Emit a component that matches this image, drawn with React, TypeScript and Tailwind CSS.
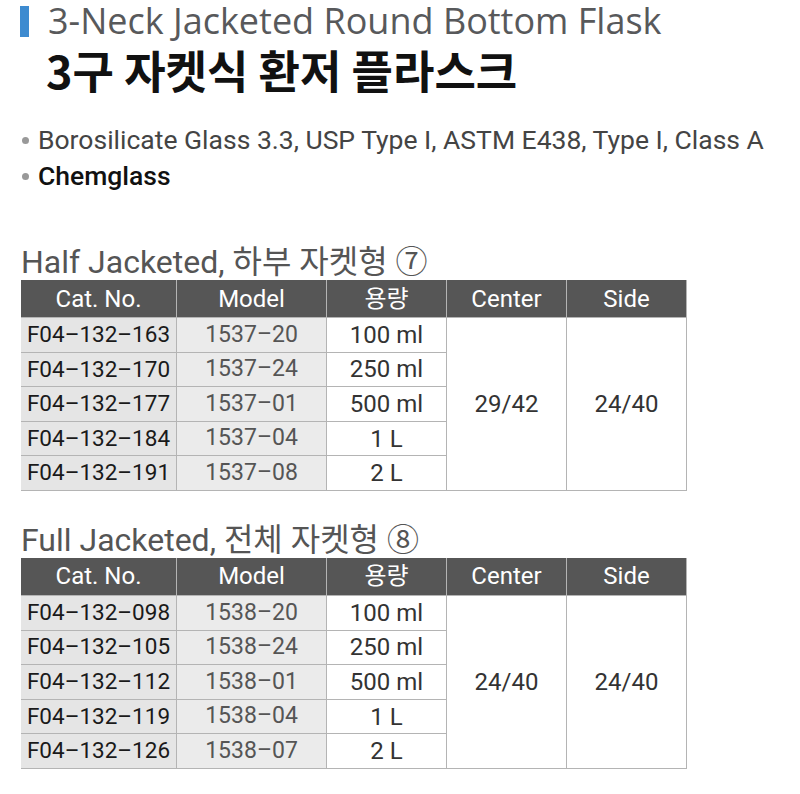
import React from "react";

const KR = { fontFamily: "Roboto, 'Noto Sans CJK KR', sans-serif" };

type Row = [string, string, string];

function SpecTable({ rows, center, side }: { rows: Row[]; center: string; side: string }) {
  const head = ["Cat. No.", "Model", "용량", "Center", "Side"];
  return (
    <div
      className="ml-[21px] w-[666px] grid grid-cols-[155px_149px_119px_119px_119px] grid-rows-[37px_repeat(5,33.6px)] gap-px bg-[#b4b4b4] pr-px pb-px"
      style={KR}
    >
      {head.map((h) => (
        <div key={h} className="bg-[#565656] text-white text-[24px] flex items-center justify-center">
          {h}
        </div>
      ))}
      {rows.map((r, i) => (
        <React.Fragment key={r[0]}>
          <div className="bg-[#e5e5e5] text-[#1a1a1a] text-[22.5px] flex items-center justify-center col-start-1" style={{ gridRowStart: i + 2 }}>
            {r[0]}
          </div>
          <div className="bg-[#ebebeb] text-[#555] text-[23px] flex items-center justify-center col-start-2" style={{ gridRowStart: i + 2 }}>
            {r[1]}
          </div>
          <div className="bg-white text-[#333] text-[24px] flex items-center justify-center col-start-3" style={{ gridRowStart: i + 2 }}>
            {r[2]}
          </div>
        </React.Fragment>
      ))}
      <div className="bg-white text-[#333] text-[24px] flex items-center justify-center col-start-4 row-start-2 row-span-5">
        {center}
      </div>
      <div className="bg-white text-[#333] text-[24px] flex items-center justify-center col-start-5 row-start-2 row-span-5">
        {side}
      </div>
    </div>
  );
}

export default function App() {
  const half: Row[] = [
    ["F04–132–163", "1537–20", "100 ml"],
    ["F04–132–170", "1537–24", "250 ml"],
    ["F04–132–177", "1537–01", "500 ml"],
    ["F04–132–184", "1537–04", "1 L"],
    ["F04–132–191", "1537–08", "2 L"],
  ];
  const full: Row[] = [
    ["F04–132–098", "1538–20", "100 ml"],
    ["F04–132–105", "1538–24", "250 ml"],
    ["F04–132–112", "1538–01", "500 ml"],
    ["F04–132–119", "1538–04", "1 L"],
    ["F04–132–126", "1538–07", "2 L"],
  ];
  return (
    <div className="w-[800px] h-[794px] bg-white overflow-hidden">
      <div className="flex items-center h-[42px]">
        <div className="ml-[20px] w-[9px] h-[31px] bg-[#3d8bd0]" />
        <div
          className="ml-[19px] text-[36px] leading-[42px] text-[#58595b]"
          style={{ fontFamily: "'Open Sans', 'Noto Sans CJK KR', sans-serif" }}
        >
          3-Neck Jacketed Round Bottom Flask
        </div>
      </div>
      <div
        className="ml-[46px] mt-[1px] text-[45px] leading-[54px] font-bold text-[#111]"
        style={{ fontFamily: "'Noto Sans CJK KR', sans-serif" }}
      >
        3구 자켓식 환저 플라스크
      </div>
      <div className="mt-[25px]" style={KR}>
        <div className="flex items-center h-[36px]">
          <span className="ml-[22px] w-[7px] h-[7px] rounded-full bg-[#999]" />
          <span className="ml-[9px] text-[26.5px] text-[#444]">
            Borosilicate Glass 3.3, USP Type I, ASTM E438, Type I, Class A
          </span>
        </div>
        <div className="flex items-center h-[36px]">
          <span className="ml-[22px] w-[7px] h-[7px] rounded-full bg-[#999]" />
          <span className="ml-[9px] text-[26.5px] text-[#111] font-medium">Chemglass</span>
        </div>
      </div>
      <div className="mt-[50px] ml-[21px] h-[36px] flex items-center text-[32px] text-[#555]" style={KR}>
        Half Jacketed, 하부 자켓형 ⑦
      </div>
      <SpecTable rows={half} center="29/42" side="24/40" />
      <div className="mt-[31px] ml-[21px] h-[36px] flex items-center text-[32px] text-[#555]" style={KR}>
        Full Jacketed, 전체 자켓형 ⑧
      </div>
      <SpecTable rows={full} center="24/40" side="24/40" />
    </div>
  );
}
